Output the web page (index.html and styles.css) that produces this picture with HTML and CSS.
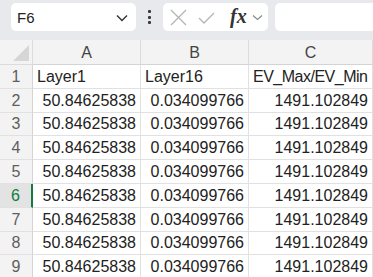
FILE: index.html
```html
<!DOCTYPE html>
<html>
<head>
<meta charset="utf-8">
<link rel="stylesheet" href="styles.css">
</head>
<body>
<div class="app">
  <div class="toolbar">
    <div class="namebox">
      <span class="nb-text">F6</span>
      <svg class="nb-chev" width="12" height="8" viewBox="0 0 12 8"><path d="M1 1.5 L6 6.5 L11 1.5" fill="none" stroke="#333" stroke-width="1.4"/></svg>
    </div>
    <div class="kebab"><span></span><span></span><span></span></div>
    <div class="fbox">
      <svg class="ic-x" width="17" height="17" viewBox="0 0 17 17"><path d="M1 1 L16 16 M16 1 L1 16" stroke="#b4b4b4" stroke-width="1.3" fill="none"/></svg>
      <svg class="ic-check" width="17" height="12" viewBox="0 0 17 12"><path d="M1 6 L6 11 L16 1" stroke="#b4b4b4" stroke-width="1.3" fill="none"/></svg>
      <span class="fx">fx</span>
      <svg class="fx-chev" width="11" height="7" viewBox="0 0 11 7"><path d="M1 1.5 L5.5 5.5 L10 1.5" fill="none" stroke="#8a8a8a" stroke-width="1.2"/></svg>
    </div>
    <div class="input"></div>
  </div>
  <div class="grid">
    <div class="corner"><svg width="16" height="16" viewBox="0 0 16 16"><path d="M16 0 L16 16 L0 16 Z" fill="#d6d6d6"/></svg></div>
    <div class="colh">A</div>
    <div class="colh">B</div>
    <div class="colh">C</div>

    <div class="rowh">1</div><div class="cell">Layer1</div><div class="cell">Layer16</div><div class="cell tight">EV_Max/EV_Min</div>
    <div class="rowh">2</div><div class="cell num">50.84625838</div><div class="cell num">0.034099766</div><div class="cell num">1491.102849</div>
    <div class="rowh">3</div><div class="cell num">50.84625838</div><div class="cell num">0.034099766</div><div class="cell num">1491.102849</div>
    <div class="rowh">4</div><div class="cell num">50.84625838</div><div class="cell num">0.034099766</div><div class="cell num">1491.102849</div>
    <div class="rowh">5</div><div class="cell num">50.84625838</div><div class="cell num">0.034099766</div><div class="cell num">1491.102849</div>
    <div class="rowh active">6</div><div class="cell num">50.84625838</div><div class="cell num">0.034099766</div><div class="cell num">1491.102849</div>
    <div class="rowh">7</div><div class="cell num">50.84625838</div><div class="cell num">0.034099766</div><div class="cell num">1491.102849</div>
    <div class="rowh">8</div><div class="cell num">50.84625838</div><div class="cell num">0.034099766</div><div class="cell num">1491.102849</div>
    <div class="rowh">9</div><div class="cell num">50.84625838</div><div class="cell num">0.034099766</div><div class="cell num">1491.102849</div>
  </div>
</div>
</body>
</html>
```

FILE: styles.css
```css
* { box-sizing: border-box; }
html, body { margin: 0; padding: 0; }
body {
  width: 373px;
  height: 277px;
  overflow: hidden;
  background: #ffffff;
  font-family: "Liberation Sans", Arial, sans-serif;
  color: #222;
}
.app { width: 373px; height: 277px; overflow: hidden; }
.toolbar {
  height: 40px;
  background: #e8e9ec;
  display: flex;
  align-items: flex-start;
  padding: 3px 0 0 11px;
}
.namebox {
  width: 125px;
  height: 28px;
  background: #fff;
  border-radius: 5px;
  display: flex;
  align-items: center;
  padding: 0 8px 0 6px;
  justify-content: space-between;
}
.nb-text { font-size: 15px; color: #222; }
.nb-chev { margin-top: 1px; }
.kebab {
  width: 27px;
  height: 28px;
  display: flex;
  flex-direction: column;
  align-items: center;
  justify-content: center;
  gap: 2.5px;
}
.kebab span { width: 3px; height: 3px; background: #3a3a3a; border-radius: 1px; }
.fbox {
  width: 105px;
  height: 28px;
  background: #fff;
  border-radius: 5px;
  display: flex;
  align-items: center;
  padding-left: 7px;
}
.ic-x { margin-right: 11px; }
.ic-check { margin-right: 15px; margin-top: 2px; }
.fx {
  font-family: "Liberation Serif", "Times New Roman", serif;
  font-style: italic;
  font-weight: bold;
  font-size: 20px;
  color: #333;
  margin-right: 5px;
  margin-top: -2px;
}
.fx-chev { margin-top: 1px; }
.input {
  margin-left: 7px;
  flex: 1;
  height: 28px;
  background: #fff;
  border-radius: 5px 0 0 5px;
}
.grid {
  display: grid;
  grid-template-columns: 33px 108px 108px 124px;
  grid-template-rows: 25px repeat(9, 23.8px);
  background: #fff;
}
.corner {
  background: #f3f3f3;
  border-right: 1px solid #dcdcdc;
  border-bottom: 1px solid #dcdcdc;
  display: flex;
  align-items: flex-end;
  justify-content: flex-end;
  padding: 0 3px 3px 0;
}
.colh {
  background: #f3f3f3;
  border-right: 1px solid #dcdcdc;
  border-bottom: 1px solid #d4d4d4;
  font-size: 16px;
  color: #444;
  display: flex;
  align-items: center;
  justify-content: center;
  padding-top: 1px;
}
.rowh {
  background: #f3f3f3;
  border-right: 1px solid #d4d4d4;
  border-bottom: 1px solid #e1e1e1;
  font-size: 16px;
  color: #5e5e5e;
  display: flex;
  align-items: center;
  justify-content: center;
  padding-top: 1px;
}
.rowh.active {
  background: #e3e3e3;
  color: #107c41;
  border-right: 2px solid #107c41;
}
.cell {
  border-right: 1px solid #e1e1e1;
  border-bottom: 1px solid #e1e1e1;
  font-size: 16px;
  color: #222;
  display: flex;
  align-items: center;
  padding: 1px 4px 0;
  white-space: nowrap;
  overflow: hidden;
}
.cell.num { justify-content: flex-end; }
.cell.tight { letter-spacing: -0.5px; }
```
